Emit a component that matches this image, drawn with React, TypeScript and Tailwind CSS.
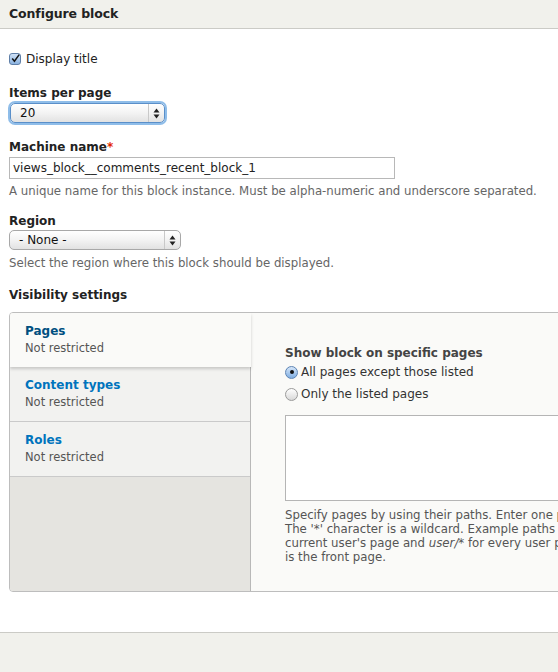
import React from "react";

function Arrows() {
  return (
    <svg width="7" height="11" viewBox="0 0 7 11" className="block">
      <path d="M3.5 0.5 L6.5 4.5 L0.5 4.5 Z" fill="#222" />
      <path d="M3.5 10.5 L6.5 6.5 L0.5 6.5 Z" fill="#222" />
    </svg>
  );
}

function Select({ value, width, focus }: { value: string; width: string; focus?: boolean }) {
  return (
    <div
      className={`${width} h-[20px] flex items-stretch rounded-[5px] border ${
        focus ? "border-[#5a8fc9] shadow-[0_0_0_2px_#8fbde9]" : "border-[#a8a8a8]"
      } bg-gradient-to-b from-[#ffffff] via-[#f3f3f3] to-[#e2e2e2]`}
    >
      <div className="flex-1 flex items-center pl-[9px] text-[12px] text-[#111]">{value}</div>
      <div className="w-[16px] flex items-center justify-center border-l border-[#c9c9c9]">
        <Arrows />
      </div>
    </div>
  );
}

export default function App() {
  return (
    <div
      className="w-[558px] h-[672px] overflow-hidden bg-white text-[#333] flex flex-col"
      style={{ fontFamily: '"DejaVu Sans", "Noto Sans", sans-serif' }}
    >
      <div className="h-[29px] shrink-0 bg-[#f1f1ec] border-b border-[#cbcbc6] flex items-center pl-[9px]">
        <span className="text-[12.5px] font-bold text-[#222] tracking-[-0.1px]">Configure block</span>
      </div>

      <div className="flex-1 pl-[9px] pt-[23px]">
        <div className="flex items-center h-[14px]">
          <div className="w-[12px] h-[12px] rounded-[3px] border border-[#5f7fa8] bg-gradient-to-b from-[#cfe1f6] to-[#8bb3e0] flex items-center justify-center">
            <svg width="11" height="11" viewBox="0 0 11 11" className="-mt-[2px] ml-[1px]">
              <path d="M1.5 5.5 L4.2 8.8 L10 0.8" stroke="#111" strokeWidth="1.8" fill="none" />
            </svg>
          </div>
          <span className="ml-[5px] text-[12px] text-[#222]">Display title</span>
        </div>

        <div className="mt-[20px] text-[12px] font-bold text-[#222] leading-[14px]">Items per page</div>
        <div className="mt-[3px] ml-[1px]">
          <Select value="20" width="w-[155px]" focus />
        </div>

        <div className="mt-[17px] text-[12px] font-bold text-[#222] leading-[14px]">
          Machine name<span className="text-[#e32700]">*</span>
        </div>
        <div className="mt-[3px] w-[386px] h-[22px] border border-[#b8b8b8] bg-white flex items-center pl-[3px] text-[12px] text-[#222]">
          views_block__comments_recent_block_1
        </div>
        <div className="mt-[5px] text-[11.75px] text-[#666] leading-[14px] whitespace-nowrap">
          A unique name for this block instance. Must be alpha-numeric and underscore separated.
        </div>

        <div className="mt-[16px] text-[12px] font-bold text-[#222] leading-[14px]">Region</div>
        <div className="mt-[2px]">
          <Select value="- None -" width="w-[172px]" />
        </div>
        <div className="mt-[6px] text-[11.75px] text-[#666] leading-[14px] whitespace-nowrap">
          Select the region where this block should be displayed.
        </div>

        <div className="mt-[18px] text-[12px] font-bold text-[#222] leading-[14px]">Visibility settings</div>

        <div className="mt-[10px] w-[700px] h-[280px] flex border border-[#bdbdbd] rounded-[4px] overflow-hidden">
          <div className="w-[241px] shrink-0 flex flex-col bg-[#e5e4e0] border-r border-[#b8b8b8] relative z-10">
            <div className="h-[54px] bg-[#fafaf8] -mr-[1px] pl-[15px] pt-[11px] shadow-[0_2px_3px_rgba(0,0,0,0.18)] relative">
              <div className="text-[12px] font-bold text-[#004f80] leading-[14px]">Pages</div>
              <div className="mt-[3px] text-[11.5px] text-[#555] leading-[14px]">Not restricted</div>
            </div>
            <div className="h-[55px] bg-[#f2f2f0] border-b border-[#cacaca] pl-[15px] pt-[11px]">
              <div className="text-[12px] font-bold text-[#0074bd] leading-[14px]">Content types</div>
              <div className="mt-[3px] text-[11.5px] text-[#555] leading-[14px]">Not restricted</div>
            </div>
            <div className="h-[55px] bg-[#f2f2f0] border-b border-[#cacaca] pl-[15px] pt-[11px]">
              <div className="text-[12px] font-bold text-[#0074bd] leading-[14px]">Roles</div>
              <div className="mt-[3px] text-[11.5px] text-[#555] leading-[14px]">Not restricted</div>
            </div>
          </div>
          <div className="flex-1 bg-[#fafaf8] pl-[34px] pt-[33px]">
            <div className="text-[12px] font-bold text-[#444] leading-[14px]">Show block on specific pages</div>
            <div className="mt-[5px] flex items-center h-[14px]">
              <div className="w-[13px] h-[13px] rounded-full border border-[#5d84b4] bg-gradient-to-b from-[#d6e6f8] to-[#80aee2] flex items-center justify-center">
                <div className="w-[4px] h-[4px] rounded-full bg-[#111]" />
              </div>
              <span className="ml-[3px] text-[12px] text-[#333]">All pages except those listed</span>
            </div>
            <div className="mt-[8px] flex items-center h-[14px]">
              <div className="w-[13px] h-[13px] rounded-full border border-[#9a9a9a] bg-gradient-to-b from-[#ffffff] to-[#d8d8d8]" />
              <span className="ml-[3px] text-[12px] text-[#333]">Only the listed pages</span>
            </div>
            <div className="mt-[14px] w-[340px] h-[86px] border border-[#b5b5b5] bg-white" />
            <div className="mt-[7px] text-[11.75px] text-[#555] leading-[14px] whitespace-nowrap">
              <div>Specify pages by using their paths. Enter one path per line.</div>
              <div>The '*' character is a wildcard. Example paths are user for the</div>
              <div>
                current user's page and <em>user/*</em> for every user page. &lt;front&gt;
              </div>
              <div>is the front page.</div>
            </div>
          </div>
        </div>
      </div>

      <div className="h-[40px] shrink-0 bg-[#f1f1ec] border-t border-[#cbcbc6]" />
    </div>
  );
}
